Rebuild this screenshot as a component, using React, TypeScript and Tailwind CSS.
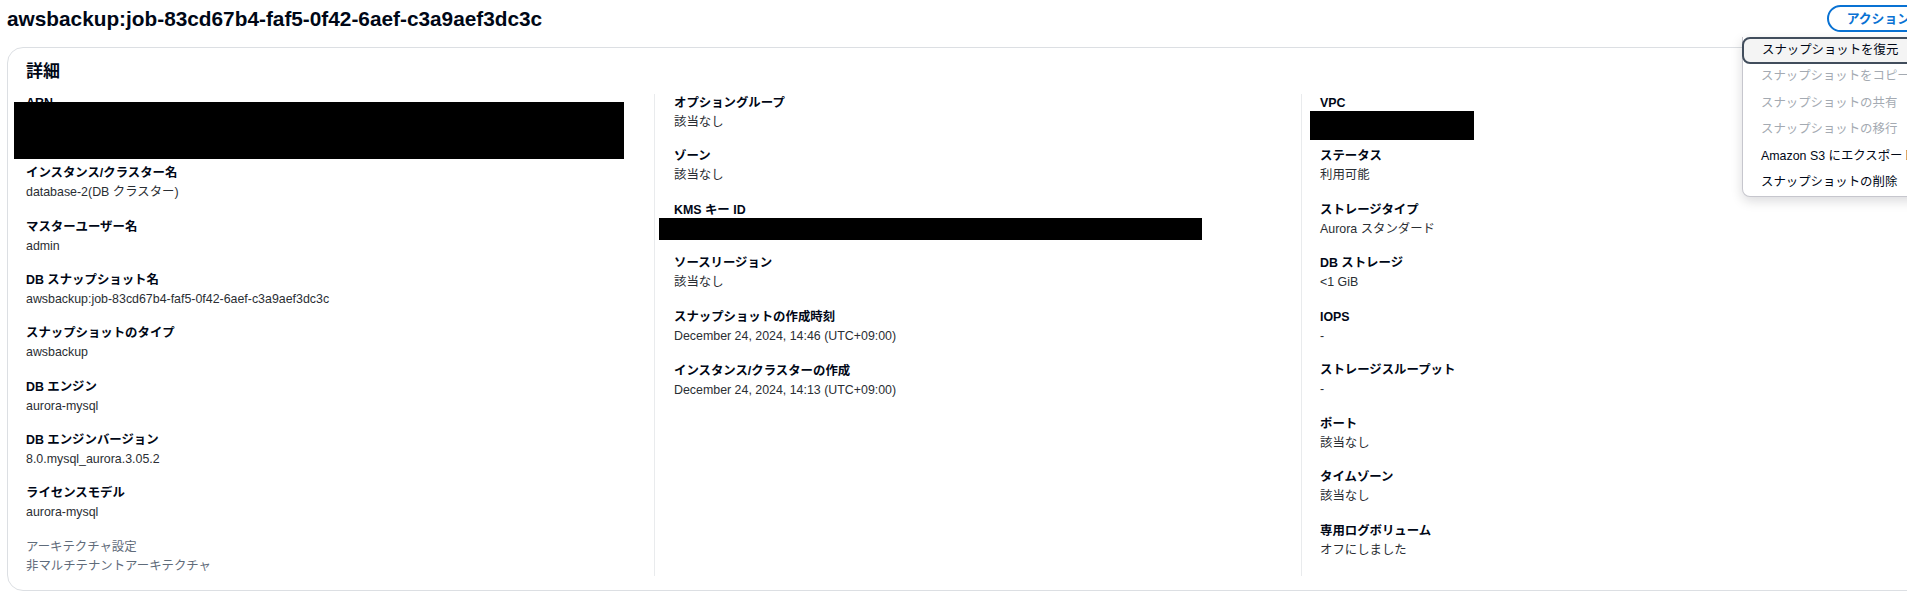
import { ChevronDown } from "lucide-react";

type Item = {
  label: string;
  value: string;
  muted?: boolean;
  redact?: string;
  tall?: boolean;
};

const col1: Item[] = [
  { label: "ARN", value: "", tall: true, redact: "top-[8.5px] left-[-12px] w-[610px] h-[57px]" },
  { label: "インスタンス/クラスター名", value: "database-2(DB クラスター)" },
  { label: "マスターユーザー名", value: "admin" },
  { label: "DB スナップショット名", value: "awsbackup:job-83cd67b4-faf5-0f42-6aef-c3a9aef3dc3c" },
  { label: "スナップショットのタイプ", value: "awsbackup" },
  { label: "DB エンジン", value: "aurora-mysql" },
  { label: "DB エンジンバージョン", value: "8.0.mysql_aurora.3.05.2" },
  { label: "ライセンスモデル", value: "aurora-mysql" },
  { label: "アーキテクチャ設定", value: "非マルチテナントアーキテクチャ", muted: true },
];

const col2: Item[] = [
  { label: "オプショングループ", value: "該当なし" },
  { label: "ゾーン", value: "該当なし" },
  { label: "KMS キー ID", value: "", redact: "top-[17px] left-[-15px] w-[543px] h-[22px]" },
  { label: "ソースリージョン", value: "該当なし" },
  { label: "スナップショットの作成時刻", value: "December 24, 2024, 14:46 (UTC+09:00)" },
  { label: "インスタンス/クラスターの作成", value: "December 24, 2024, 14:13 (UTC+09:00)" },
];

const col3: Item[] = [
  { label: "VPC", value: "", redact: "top-[17.5px] left-[-10px] w-[164px] h-[29px]" },
  { label: "ステータス", value: "利用可能" },
  { label: "ストレージタイプ", value: "Aurora スタンダード" },
  { label: "DB ストレージ", value: "<1 GiB" },
  { label: "IOPS", value: "-" },
  { label: "ストレージスループット", value: "-" },
  { label: "ポート", value: "該当なし" },
  { label: "タイムゾーン", value: "該当なし" },
  { label: "専用ログボリューム", value: "オフにしました" },
];

const menu = [
  { text: "スナップショットを復元", active: true },
  { text: "スナップショットをコピー", disabled: true },
  { text: "スナップショットの共有", disabled: true },
  { text: "スナップショットの移行", disabled: true },
  { text: "Amazon S3 にエクスポート" },
  { text: "スナップショットの削除" },
];

function Field({ item }: { item: Item }) {
  return (
    <div className="relative">
      <div
        className={
          item.muted
            ? "leading-[19px] text-[#5f6b7a]"
            : "leading-[19px] font-bold text-[#000716]"
        }
      >
        {item.label}
      </div>
      <div
        className={
          (item.tall ? "h-[36.5px] " : "min-h-[19px] ") +
          (item.muted ? "leading-[19px] text-[#5f6b7a]" : "leading-[19px] text-[#2a2e33]")
        }
      >
        {item.value}
      </div>
      {/* redaction box over the value */}
      {item.redact && <div className={"absolute bg-black " + item.redact} />}
    </div>
  );
}

function Column({ items, className, gap }: { items: Item[]; className: string; gap: string }) {
  return (
    <div className={"flex flex-col " + gap + " " + className}>
      {items.map((it) => (
        <Field key={it.label} item={it} />
      ))}
    </div>
  );
}

export default function App() {
  return (
    <div
      className="w-screen h-screen overflow-hidden bg-white text-[12.4px]"
      style={{ fontFamily: '"Liberation Sans", "Noto Sans CJK JP", sans-serif' }}
    >
      <div className="relative w-[1980px] pl-[7px] pt-[5px]">
        {/* Header */}
        <div className="flex items-start justify-between h-[27px] pr-[34px]">
          <h1 className="text-[20.8px] leading-[27px] font-bold text-[#000716]">
            awsbackup:job-83cd67b4-faf5-0f42-6aef-c3a9aef3dc3c
          </h1>
          <button className="flex items-center gap-1 h-[27px] rounded-full border-2 border-[#0972d3] pl-[18px] pr-[16px] text-[12.8px] font-bold text-[#0972d3]">
            アクション
            <ChevronDown size={14} strokeWidth={3} />
          </button>
        </div>

        {/* Details card */}
        <div className="mt-[15px] w-[1962px] rounded-[16px] border border-[#dcdfe3] pl-[18px] pt-[13px] pb-[14px]">
          <h2 className="text-[17px] leading-[22px] font-bold text-[#000716]">詳細</h2>
          <div className="mt-[10.7px] flex items-stretch">
            <Column items={col1} gap="gap-[15.3px]" className="w-[628px]" />
            <Column items={col2} gap="gap-[15.6px]" className="w-[647px] border-l border-[#e9ebed] pl-[19px]" />
            <Column items={col3} gap="gap-[15.5px]" className="w-[647px] border-l border-[#e9ebed] pl-[18px]" />
          </div>
        </div>

        {/* Actions dropdown */}
        <div className="absolute left-[1742px] top-[37px] w-[210px] rounded-b-[8px] border-x border-b border-[#c6c6cd] bg-white shadow-[0_4px_12px_rgba(0,7,22,0.15)]">
          {menu.map((m) => (
            <div
              key={m.text}
              className={
                "flex items-center h-[26.5px] whitespace-nowrap " +
                (m.active
                  ? "-mx-px pl-[18px] rounded-[8px] border-2 border-[#414d5c] bg-[#f4f4f4] text-[#000716]"
                  : m.disabled
                  ? "pl-[18px] text-[#a4aab2]"
                  : "pl-[18px] text-[#000716]")
              }
            >
              {m.text}
            </div>
          ))}
        </div>
      </div>
    </div>
  );
}
